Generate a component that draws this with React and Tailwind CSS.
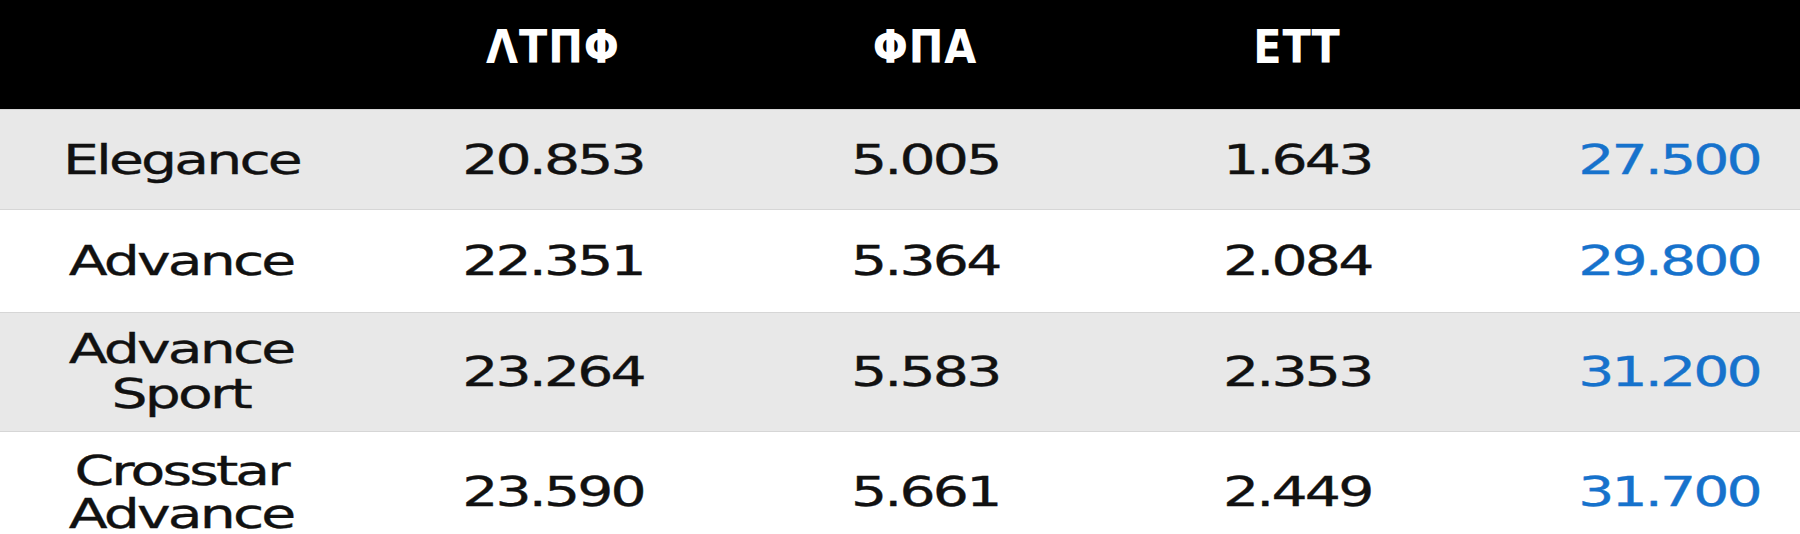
const headers = ["", "ΛΤΠΦ", "ΦΠΑ", "ΕΤΤ", ""];

const rows = [
  { name: ["Elegance"], net: "20.853", vat: "5.005", tax: "1.643", price: "27.500", bg: "bg-[#e8e8e8]", h: "h-[100px]", lh: "leading-[44px]" },
  { name: ["Advance"], net: "22.351", vat: "5.364", tax: "2.084", price: "29.800", bg: "bg-white", h: "h-[103px]", lh: "leading-[44px]" },
  { name: ["Advance", "Sport"], net: "23.264", vat: "5.583", tax: "2.353", price: "31.200", bg: "bg-[#e8e8e8]", h: "h-[119px]", lh: "leading-[45px]" },
  { name: ["Crosstar", "Advance"], net: "23.590", vat: "5.661", tax: "2.449", price: "31.700", bg: "bg-white", h: "h-[122px]", lh: "leading-[43px]" },
];

// wide grotesk look: DejaVu Sans stretched horizontally, tighter tracking
const Wide = ({ children }) => (
  <span className="inline-block scale-x-[1.42] tracking-[-0.05em] [-webkit-text-stroke:0.35px_currentColor]">
    {children}
  </span>
);

export default function App() {
  return (
    <div className="w-full h-[534px] overflow-hidden bg-white font-['DejaVu_Sans',sans-serif]">
      <div className="-ml-[5px] w-[1860px]">
        <div className="grid grid-cols-5 h-[109px] bg-black text-white font-['DejaVu_Sans_Condensed','DejaVu_Sans',sans-serif] font-bold text-[46px] leading-none tracking-[0.02em]">
          {headers.map((h, i) => (
            <div key={i} className="flex items-center justify-center pb-[16px]">
              {h}
            </div>
          ))}
        </div>

        {rows.map((r, i) => (
          <div
            key={i}
            className={`grid grid-cols-5 ${r.h} ${r.bg} ${r.lh} border-t border-[#d6d6d6] text-[40px] text-[#111]`}
          >
            <div className="flex flex-col items-center justify-center">
              {r.name.map((n) => (
                <Wide key={n}>{n}</Wide>
              ))}
            </div>
            <div className="flex items-center justify-center">
              <Wide>{r.net}</Wide>
            </div>
            <div className="flex items-center justify-center">
              <Wide>{r.vat}</Wide>
            </div>
            <div className="flex items-center justify-center">
              <Wide>{r.tax}</Wide>
            </div>
            <div className="flex items-center justify-center text-[#1672cc]">
              <Wide>{r.price}</Wide>
            </div>
          </div>
        ))}
      </div>
    </div>
  );
}
